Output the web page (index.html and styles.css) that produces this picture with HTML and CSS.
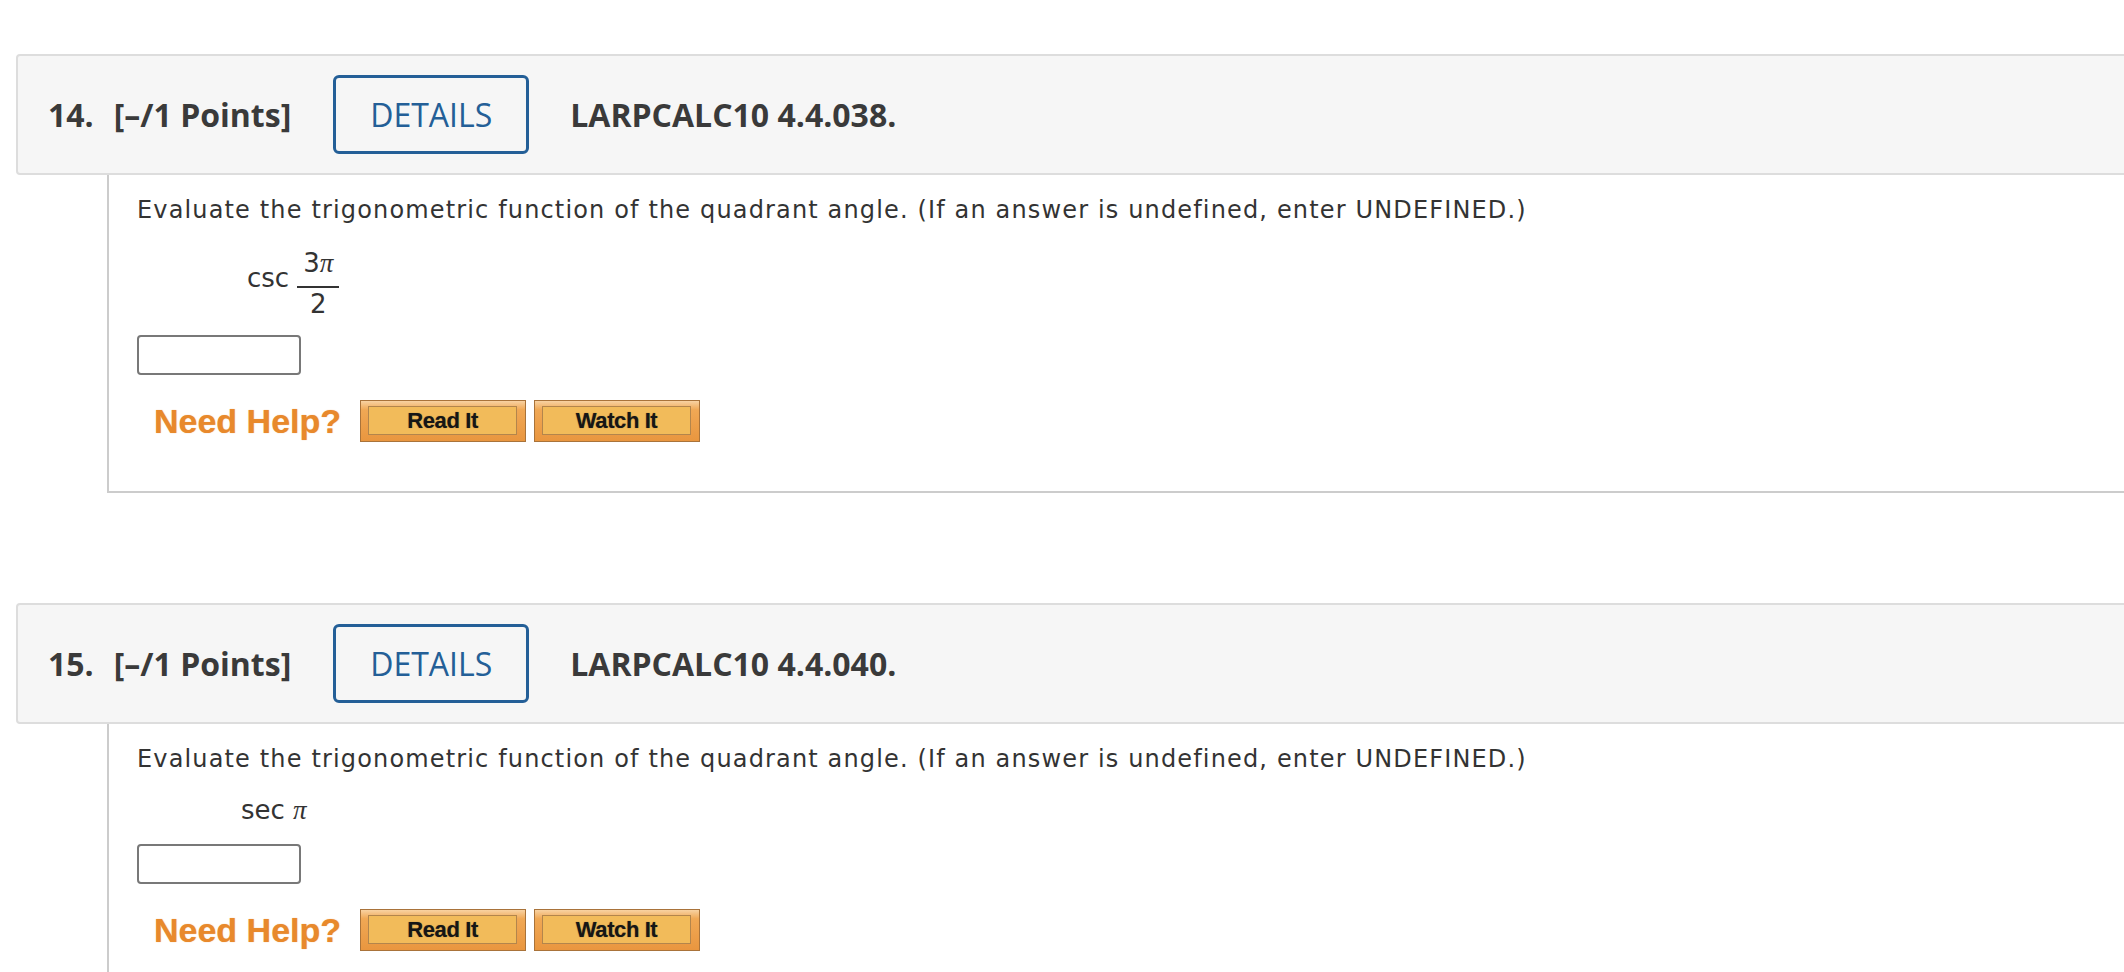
FILE: index.html
```html
<!DOCTYPE html>
<html lang="en">
<head>
<meta charset="utf-8">
<title>Questions</title>
<link rel="stylesheet" href="styles.css">
</head>
<body>
<div class="page">
  <section class="question">
    <div class="q-head">
      <span class="q-num">14.</span>
      <span class="q-points">[–/1 Points]</span>
      <button class="details-btn" type="button">DETAILS</button>
      <span class="q-code">LARPCALC10 4.4.038.</span>
    </div>
    <div class="q-body">
      <p class="prompt">Evaluate the trigonometric function of the quadrant angle. (If an answer is undefined, enter UNDEFINED.)</p>
      <div class="math math-frac">
        <span class="fn fn-raised">csc</span>
        <span class="frac">
          <span class="num">3<i class="pi">π</i></span>
          <span class="bar"></span>
          <span class="den">2</span>
        </span>
      </div>
      <input class="answer" type="text" aria-label="answer">
      <div class="help">
        <span class="need-help">Need Help?</span>
        <span class="help-btn"><span class="help-inner">Read It</span></span>
        <span class="help-btn"><span class="help-inner">Watch It</span></span>
      </div>
    </div>
  </section>

  <section class="question">
    <div class="q-head">
      <span class="q-num">15.</span>
      <span class="q-points">[–/1 Points]</span>
      <button class="details-btn" type="button">DETAILS</button>
      <span class="q-code">LARPCALC10 4.4.040.</span>
    </div>
    <div class="q-body">
      <p class="prompt">Evaluate the trigonometric function of the quadrant angle. (If an answer is undefined, enter UNDEFINED.)</p>
      <div class="math math-plain">
        <span class="fn">sec <i class="pi">π</i></span>
      </div>
      <input class="answer" type="text" aria-label="answer">
      <div class="help">
        <span class="need-help">Need Help?</span>
        <span class="help-btn"><span class="help-inner">Read It</span></span>
        <span class="help-btn"><span class="help-inner">Watch It</span></span>
      </div>
    </div>
  </section>
</div>
</body>
</html>
```

FILE: styles.css
```css
html, body {
  margin: 0;
  padding: 0;
  background: #ffffff;
}

body {
  overflow: hidden;
  font-family: "DejaVu Sans", Verdana, sans-serif;
  color: #333333;
}

.page {
  padding: 54px 0 0 16px;
}

.question {
  margin-right: -20px;
}

.question + .question {
  margin-top: 110px;
}

/* ---------- header bar ---------- */
.q-head {
  display: flex;
  align-items: center;
  background: #f6f6f6;
  border: 2px solid #dddddd;
  border-radius: 4px;
  padding: 19px 0 19px 30px;
  font-family: "Open Sans", "DejaVu Sans", sans-serif;
  font-size: 32px;
  font-weight: 700;
  color: #3a3a3a;
  line-height: 1;
}

.q-num {
  margin-right: 20px;
}

.details-btn {
  box-sizing: border-box;
  width: 196px;
  height: 79px;
  margin: 0 41px 0 42px;
  padding: 0;
  border: 3px solid #245f97;
  border-radius: 6px;
  background: transparent;
  color: #245f97;
  font-family: "Open Sans", "DejaVu Sans", sans-serif;
  font-size: 32px;
  font-weight: 400;
  line-height: 1;
}

/* ---------- body ---------- */
.q-body {
  margin-left: 91px;
  border-left: 2px solid #cccccc;
  border-bottom: 2px solid #cccccc;
  padding: 19px 0 49px 28px;
}

.prompt {
  margin: 0;
  font-size: 24px;
  line-height: 32px;
  letter-spacing: 1.15px;
  color: #333333;
}

.math {
  display: flex;
  align-items: flex-start;
  font-size: 26px;
  line-height: 28px;
  color: #333333;
}

.math-frac {
  margin: 23px 0 -2px 110px;
}

.math-plain {
  margin: 21px 0 0 104px;
}

.fn-raised {
  margin-top: 15px;
}

.frac {
  display: inline-flex;
  flex-direction: column;
  align-items: center;
  margin-left: 8px;
  padding: 0 6px;
}

.num {
  line-height: 28px;
}

.bar {
  align-self: stretch;
  height: 2px;
  margin: 9px -6px 0;
  background: #333333;
}

.den {
  margin-top: 3px;
  line-height: 26px;
}

.pi {
  font-family: "Liberation Serif", "Times New Roman", serif;
  font-style: italic;
  font-size: 27px;
}

.answer {
  display: block;
  box-sizing: border-box;
  width: 164px;
  height: 40px;
  margin: 20px 0 0 0;
  padding: 0 6px;
  border: 2px solid #787878;
  border-radius: 4px;
  background: #ffffff;
  font-size: 18px;
}

/* ---------- help row ---------- */
.help {
  display: flex;
  align-items: center;
  margin-top: 25px;
}

.need-help {
  margin: 0 19px 0 17px;
  font-family: "Liberation Sans", Arial, sans-serif;
  font-weight: 700;
  font-size: 34px;
  color: #e8892c;
  text-shadow: 0 0 1px rgba(232, 137, 44, 0.7);
}

.help-btn {
  box-sizing: border-box;
  display: block;
  width: 166px;
  height: 42px;
  margin-right: 8px;
  padding: 5px 8px 6px 7px;
  border: 1px solid #a9733a;
  background: linear-gradient(#f8d2a2 0%, #f0a855 22%, #e9963f 100%);
}

.help-inner {
  box-sizing: border-box;
  display: flex;
  align-items: center;
  justify-content: center;
  height: 100%;
  border: 1px solid #b3854c;
  background: #f2bb5a;
  font-family: "Liberation Sans", Arial, sans-serif;
  font-weight: 700;
  font-size: 22px;
  letter-spacing: -0.4px;
  color: #161616;
  text-shadow: 0 0 1px rgba(0, 0, 0, 0.45);
}
```
